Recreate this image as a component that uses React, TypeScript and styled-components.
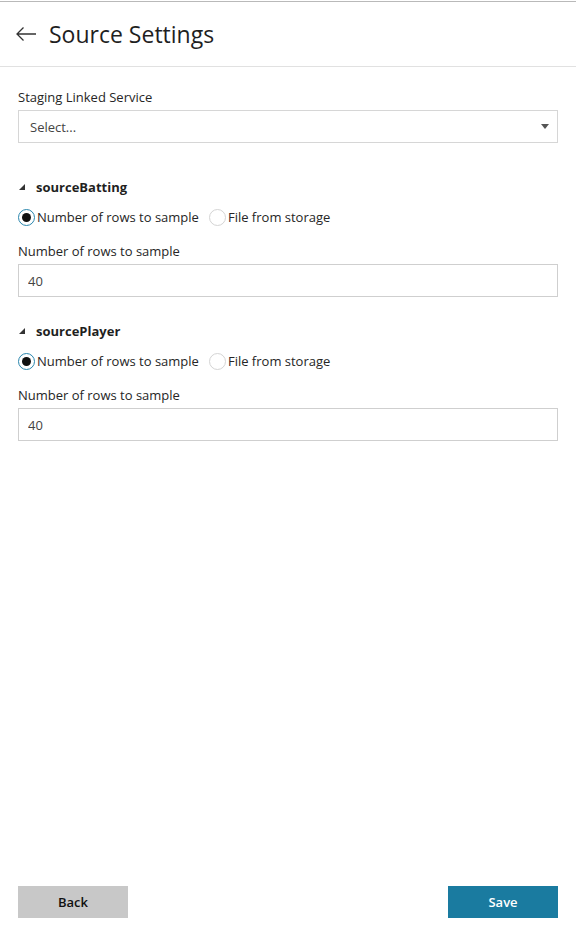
import React, { useState } from 'react';
import styled, { createGlobalStyle } from 'styled-components';

const GlobalStyle = createGlobalStyle`
  html, body {
    margin: 0;
    padding: 0;
    background: #fff;
  }
  body {
    font-family: "Open Sans", "Noto Sans", sans-serif;
    color: #222;
  }
  * { box-sizing: border-box; }
`;

const Page = styled.div`
  height: 931px;
  padding-top: 1px;
  display: flex;
  flex-direction: column;
`;

const Header = styled.header`
  height: 66px;
  border-top: 1px solid #b9b9b9;
  border-bottom: 1px solid #e1e1e1;
  display: flex;
  align-items: center;
  gap: 12px;
  padding: 0 0 0 15px;
`;

const BackArrow = styled.button`
  border: 0;
  background: none;
  padding: 0;
  width: 22px;
  height: 22px;
  display: flex;
  align-items: center;
  justify-content: center;
  cursor: pointer;
`;

const Title = styled.h1`
  margin: 0;
  font-size: 23px;
  font-weight: 400;
  color: #1f1f1f;
`;

const Content = styled.main`
  flex: 1;
  padding: 20px 18px 0;
  display: flex;
  flex-direction: column;
`;

const Label = styled.div`
  font-size: 13px;
  line-height: 20px;
  color: #262626;
  margin-bottom: 3px;
`;

const SelectBox = styled.div`
  height: 33px;
  border: 1px solid #d6d6d6;
  display: flex;
  align-items: center;
  justify-content: space-between;
  padding: 0 8px 0 11px;
  margin-bottom: 10px;
  font-size: 13px;
  color: #444;
`;

const Caret = styled.span`
  width: 0;
  height: 0;
  border-left: 4px solid transparent;
  border-right: 4px solid transparent;
  border-top: 5px solid #555;
`;

const Section = styled.section`
  margin-top: 24px;
  display: flex;
  flex-direction: column;
`;

const SectionTitle = styled.div`
  display: flex;
  align-items: center;
  gap: 11px;
  padding-left: 1px;
  font-size: 13px;
  font-weight: 700;
  line-height: 20px;
  color: #1f1f1f;
`;

const Expander = styled.span`
  width: 0;
  height: 0;
  border-left: 6px solid transparent;
  border-bottom: 6px solid #333;
`;

const RadioRow = styled.div`
  display: flex;
  align-items: center;
  gap: 10px;
  margin: 12px 0 15px;
`;

const RadioOption = styled.label`
  display: flex;
  align-items: center;
  gap: 2px;
  font-size: 13px;
  line-height: 17px;
  color: #262626;
  cursor: pointer;
`;

const RadioCircle = styled.span<{ $checked: boolean }>`
  width: 17px;
  height: 17px;
  border-radius: 50%;
  border: 1px solid ${(p) => (p.$checked ? '#2a86ad' : '#d4d4d4')};
  display: flex;
  align-items: center;
  justify-content: center;
  &::after {
    content: '';
    width: 9px;
    height: 9px;
    border-radius: 50%;
    background: ${(p) => (p.$checked ? '#111' : 'transparent')};
  }
`;

const TextInput = styled.input`
  height: 33px;
  border: 1px solid #cfcfcf;
  padding: 0 9px;
  font-family: inherit;
  font-size: 13px;
  color: #444;
  outline: none;
  width: 100%;
`;

const Footer = styled.footer`
  display: flex;
  justify-content: space-between;
  padding: 0 18px 13px;
`;

const Button = styled.button<{ $primary?: boolean }>`
  width: 110px;
  height: 32px;
  border: 0;
  font-family: inherit;
  font-size: 13px;
  font-weight: 600;
  background: ${(p) => (p.$primary ? '#1a7ba0' : '#c8c8c8')};
  color: ${(p) => (p.$primary ? '#fff' : '#111')};
  cursor: pointer;
`;

type SourceProps = { name: string; focused?: boolean };

function SourceBlock({ name, focused }: SourceProps) {
  const [mode, setMode] = useState<'rows' | 'file'>('rows');
  return (
    <Section>
      <SectionTitle>
        <Expander />
        {name}
      </SectionTitle>
      <RadioRow>
        <RadioOption onClick={() => setMode('rows')}>
          <RadioCircle $checked={mode === 'rows'} />
          Number of rows to sample
        </RadioOption>
        <RadioOption onClick={() => setMode('file')}>
          <RadioCircle $checked={mode === 'file'} />
          File from storage
        </RadioOption>
      </RadioRow>
      <Label>Number of rows to sample</Label>
      <TextInput defaultValue="40" autoFocus={focused} />
    </Section>
  );
}

export default function App() {
  return (
    <>
      <GlobalStyle />
      <Page>
        <Header>
          <BackArrow aria-label="Back">
            <svg width="22" height="16" viewBox="0 0 22 16" fill="none">
              <path d="M21 8H2M8.5 1.5L2 8l6.5 6.5" stroke="#333" strokeWidth="1.3" />
            </svg>
          </BackArrow>
          <Title>Source Settings</Title>
        </Header>
        <Content>
          <Label>Staging Linked Service</Label>
          <SelectBox>
            Select...
            <Caret />
          </SelectBox>
          <SourceBlock name="sourceBatting" />
          <SourceBlock name="sourcePlayer" focused />
        </Content>
        <Footer>
          <Button>Back</Button>
          <Button $primary>Save</Button>
        </Footer>
      </Page>
    </>
  );
}
